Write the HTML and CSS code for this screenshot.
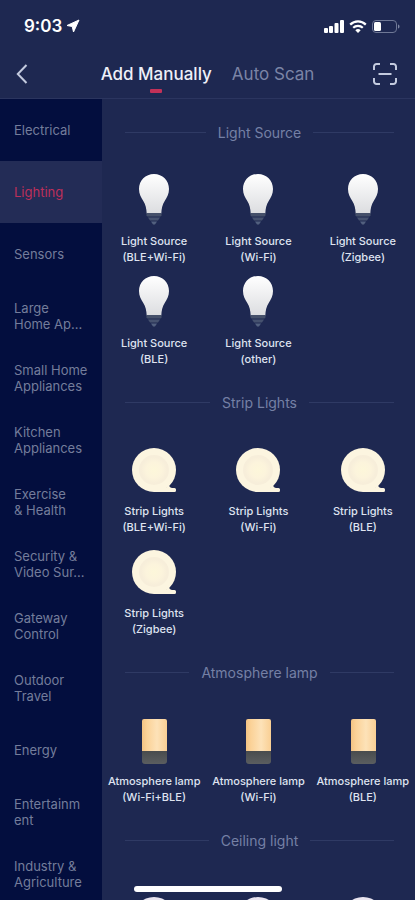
FILE: index.html
```html
<!DOCTYPE html>
<html lang="en">
<head>
  <meta charset="UTF-8"/>
  <meta name="viewport" content="width=device-width, initial-scale=1"/>
  <title>Add Manually</title>
  <link rel="stylesheet" href="styles.css">
</head>
<body>
  <!-- shared icons -->
  <svg class="sprite" aria-hidden="true">
    <defs>
      <linearGradient id="bulbFill" x1="0" y1="0" x2="0" y2="1">
        <stop offset="0" stop-color="#ffffff"/>
        <stop offset="1" stop-color="#dcdde0"/>
      </linearGradient>
      <linearGradient id="lampFill" x1="0" y1="0" x2="1" y2="0">
        <stop offset="0" stop-color="#f3c383"/>
        <stop offset="0.2" stop-color="#fbd298"/>
        <stop offset="0.6" stop-color="#fde2b8"/>
        <stop offset="1" stop-color="#f9cf94"/>
      </linearGradient>
      <linearGradient id="baseFill" x1="0" y1="0" x2="0" y2="1">
        <stop offset="0" stop-color="#474a4c"/>
        <stop offset="1" stop-color="#5b5e60"/>
      </linearGradient>
      <radialGradient id="reelFill">
        <stop offset="0" stop-color="#fdf7da"/>
        <stop offset="0.6" stop-color="#fcf4dc"/>
        <stop offset="1" stop-color="#f7eeda"/>
      </radialGradient>
      <symbol id="bulb" viewBox="0 0 60 60">
        <path d="M30 5C21.500 5 15 11.500 15 20c0 5 2 8.500 4.300 12 2.300 3.700 3.200 7.500 3.400 12.500h14.600c.2-5 1.100-8.800 3.400-12.500C43 28.500 45 25 45 20 45 11.500 38.500 5 30 5z" fill="url(#bulbFill)"/>
        <path d="M22.500 44h15v2.500l-1 1h-13l-1-1z" fill="#45506a"/>
        <path d="M24 48.500h12l-2 3h-8z" fill="#46526f"/>
        <path d="M27 52.500h6l-2 3h-2z" fill="#52607f"/>
      </symbol>
      <symbol id="reel" viewBox="0 0 60 60">
        <circle cx="30" cy="31" r="22" fill="#fcf5e0"/>
        <path d="M30 53h20.500a1.500 1.500 0 0 0 1.500-1.500v-1a1.500 1.500 0 0 0-1.500-1.500H30z" fill="#fcf5e0"/>
        <path d="M42 49l3-4q-.5 3 3 4z" fill="#fcf5e0"/>
        <circle cx="30" cy="31" r="15" fill="#f7eeda"/>
        <circle cx="30" cy="31" r="13" fill="url(#reelFill)"/>
      </symbol>
      <symbol id="lamp" viewBox="0 0 60 60">
        <path d="M18 41h25v11a3 3 0 0 1-3 3H21a3 3 0 0 1-3-3z" fill="url(#baseFill)"/>
        <path d="M18 42V12a2 2 0 0 1 2-2h21a2 2 0 0 1 2 2v30z" fill="url(#lampFill)"/>
      </symbol>
      <symbol id="ceiling" viewBox="0 0 60 60">
        <circle cx="30" cy="41" r="21" fill="#e9e4ef"/>
        <circle cx="30" cy="41" r="17" fill="#ffffff"/>
      </symbol>
    </defs>
  </svg>

  <div class="app">
    <header class="top">
      <div class="status">
        <div class="clock">
          <span>9:03</span>
          <svg width="14" height="14" viewBox="0 0 14 14"><path d="M13 1 1 6.500 6.200 7.500 7.500 13z" fill="#fff" stroke="#fff" stroke-width="1" stroke-linejoin="round"/></svg>
        </div>
        <div class="signals">
          <svg width="20" height="13" viewBox="0 0 20 13" fill="#fff">
            <rect x="0" y="8" width="4" height="5" rx="1"/>
            <rect x="5" y="6" width="4" height="7" rx="1"/>
            <rect x="10.500" y="3" width="4" height="10" rx="1"/>
            <rect x="16" y="0" width="4" height="13" rx="1"/>
          </svg>
          <svg width="18" height="13" viewBox="0 0 18 13" fill="none" stroke="#fff" stroke-width="2.200">
            <path d="M1.200 4.600a11 11 0 0 1 15.600 0"/>
            <path d="M4.200 7.800a6.800 6.800 0 0 1 9.600 0"/>
            <path d="M9 13 6.300 10.300a3.900 3.900 0 0 1 5.400 0z" fill="#fff" stroke="none"/>
          </svg>
          <svg width="28" height="13" viewBox="0 0 28 13">
            <rect x="0.500" y="0.500" width="24" height="12" rx="3.500" fill="none" stroke="#6f7896"/>
            <rect x="2" y="2" width="7" height="9" rx="1.500" fill="#fff"/>
            <path d="M26 4.500c2 .6 2 3.400 0 4z" fill="#7d86a2"/>
          </svg>
        </div>
      </div>
      <nav class="nav">
        <button class="icon-btn" aria-label="Back">
          <svg width="12" height="20" viewBox="0 0 12 20"><path d="M10.500 1 1.800 10l8.700 9" fill="none" stroke="#c3cade" stroke-width="2"/></svg>
        </button>
        <div class="tabs">
          <button class="tab active">Add Manually</button>
          <button class="tab">Auto Scan</button>
        </div>
        <button class="icon-btn" aria-label="Scan code">
          <svg width="24" height="22" viewBox="0 0 24 22" fill="none" stroke="#c3cade" stroke-width="2">
            <path d="M1 7V3.500A2.500 2.500 0 0 1 3.500 1H7M17 1h3.500A2.500 2.500 0 0 1 23 3.500V7M23 15v3.500a2.500 2.500 0 0 1-2.500 2.500H17M7 21H3.500A2.500 2.500 0 0 1 1 18.500V15M5.500 11h13"/>
          </svg>
        </button>
      </nav>
    </header>

    <div class="body">
      <aside class="sidebar">
        <a href="#">Electrical</a>
        <a href="#" class="active">Lighting</a>
        <a href="#">Sensors</a>
        <a href="#">Large<br>Home Ap...</a>
        <a href="#">Small Home Appliances</a>
        <a href="#">Kitchen Appliances</a>
        <a href="#">Exercise<br>&amp; Health</a>
        <a href="#">Security &amp;<br>Video Sur...</a>
        <a href="#">Gateway Control</a>
        <a href="#">Outdoor Travel</a>
        <a href="#">Energy</a>
        <a href="#">Entertainm<br>ent</a>
        <a href="#">Industry &amp; Agriculture</a>
      </aside>

      <main class="content">
        <section>
          <h2>Light Source</h2>
          <div class="grid">
            <button class="device"><svg><use href="#bulb"/></svg><span>Light Source<br>(BLE+Wi-Fi)</span></button>
            <button class="device"><svg><use href="#bulb"/></svg><span>Light Source<br>(Wi-Fi)</span></button>
            <button class="device"><svg><use href="#bulb"/></svg><span>Light Source<br>(Zigbee)</span></button>
            <button class="device"><svg><use href="#bulb"/></svg><span>Light Source<br>(BLE)</span></button>
            <button class="device"><svg><use href="#bulb"/></svg><span>Light Source<br>(other)</span></button>
          </div>
        </section>

        <section>
          <h2>Strip Lights</h2>
          <div class="grid">
            <button class="device"><svg><use href="#reel"/></svg><span>Strip Lights<br>(BLE+Wi-Fi)</span></button>
            <button class="device"><svg><use href="#reel"/></svg><span>Strip Lights<br>(Wi-Fi)</span></button>
            <button class="device"><svg><use href="#reel"/></svg><span>Strip Lights<br>(BLE)</span></button>
            <button class="device"><svg><use href="#reel"/></svg><span>Strip Lights<br>(Zigbee)</span></button>
          </div>
        </section>

        <section>
          <h2>Atmosphere lamp</h2>
          <div class="grid">
            <button class="device"><svg><use href="#lamp"/></svg><span>Atmosphere lamp<br>(Wi-Fi+BLE)</span></button>
            <button class="device"><svg><use href="#lamp"/></svg><span>Atmosphere lamp<br>(Wi-Fi)</span></button>
            <button class="device"><svg><use href="#lamp"/></svg><span>Atmosphere lamp<br>(BLE)</span></button>
          </div>
        </section>

        <section>
          <h2>Ceiling light</h2>
          <div class="grid">
            <button class="device" aria-label="Ceiling light"><svg><use href="#ceiling"/></svg></button>
            <button class="device" aria-label="Ceiling light"><svg><use href="#ceiling"/></svg></button>
            <button class="device" aria-label="Ceiling light"><svg><use href="#ceiling"/></svg></button>
          </div>
        </section>
      </main>
    </div>

    <div class="home-bar"></div>
  </div>
</body>
</html>
```
FILE: styles.css
```css
* { margin:0; padding:0; box-sizing:border-box }
body {
  font-family:Inter,"Liberation Sans",sans-serif;
  background:#1e2851; color:#dfe3f0;
}
button {
  background:none; border:none; color:inherit;
  font-family:inherit; cursor:pointer;
}
.sprite { position:absolute; width:0; height:0 }
.app {
  display:flex; flex-direction:column;
  height:100vh; overflow:hidden;
}

/* Status bar + tabs */
.top { flex:none; border-bottom:1px solid #2b355f }
.status {
  display:flex; align-items:center; justify-content:space-between;
  height:52px; padding:0 15px 0 24px;
}
.clock {
  display:flex; align-items:center; gap:4px;
  font-size:17px; font-weight:600; color:#fff;
}
.signals { display:flex; align-items:center; gap:5px }
.nav {
  display:flex; align-items:center; justify-content:space-between;
  height:46px; padding:0 18px 2px 16px;
}
.icon-btn { display:flex }
.tabs { display:flex; gap:20px; margin-left:14px }
.tab {
  position:relative; font-size:17px; line-height:44px;
  color:#7b84a6;
}
.tab.active { font-weight:500; color:#eef0f8 }
.tab.active::after {
  content:""; position:absolute; left:50%; bottom:3px;
  width:12px; height:4px; margin-left:-6px;
  background:#c23158; border-radius:1px;
}

.body { flex:1; display:flex; min-height:0 }

/* Categories */
.sidebar {
  flex:none; width:102px; overflow:auto;
  background:#030e3e; scrollbar-width:none;
}
.sidebar a {
  display:flex; align-items:center;
  height:62px; padding:0 8px 0 14px;
  font-size:13px; line-height:16px;
  color:#747d9b; text-decoration:none;
}
.sidebar a.active { background:#232c56; color:#bd2f5a }

/* Devices */
.content { flex:1; overflow:auto; scrollbar-width:none }
h2 {
  display:flex; align-items:center; gap:12px;
  height:66px; padding:0 21px 0 23px;
  font-size:14px; font-weight:400; color:#7580a5;
}
h2::before, h2::after {
  content:""; flex:1; height:1px; background:#2f3a64;
}
.grid { display:grid; grid-template-columns:repeat(3,1fr) }
.device {
  display:flex; flex-direction:column; align-items:center; gap:4px;
  height:102px; padding-top:4px;
  font-size:11px; font-weight:500; line-height:16px;
  white-space:nowrap;
}
.device svg { flex:none; width:60px; height:60px }

.home-bar {
  position:fixed; left:50%; bottom:8px;
  width:148px; height:6px; margin-left:-74px;
  background:#fff; border-radius:3px;
}
```
